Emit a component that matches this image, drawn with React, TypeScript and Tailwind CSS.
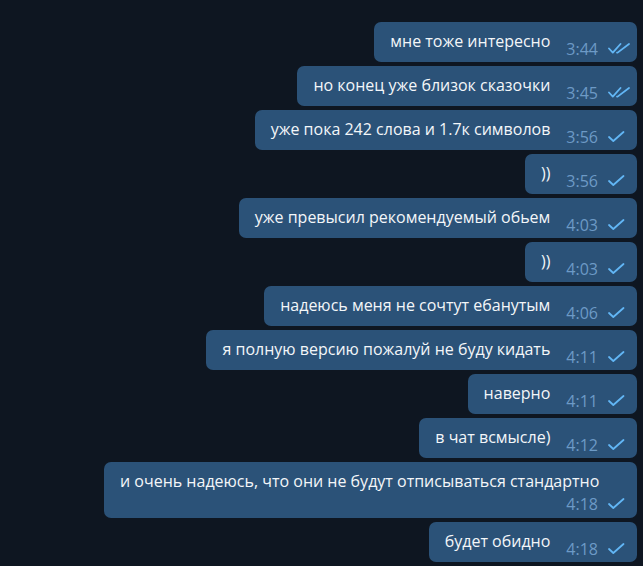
import { FC } from 'react';

type Msg = { text: string; time: string; read?: boolean; wrap?: boolean };

const messages: Msg[] = [
  { text: 'мне тоже интересно', time: '3:44', read: true },
  { text: 'но конец уже близок сказочки', time: '3:45', read: true },
  { text: 'уже пока 242 слова и 1.7к символов', time: '3:56' },
  { text: '))', time: '3:56' },
  { text: 'уже превысил рекомендуемый обьем', time: '4:03' },
  { text: '))', time: '4:03' },
  { text: 'надеюсь меня не сочтут ебанутым', time: '4:06' },
  { text: 'я полную версию пожалуй не буду кидать', time: '4:11' },
  { text: 'наверно', time: '4:11' },
  { text: 'в чат всмысле)', time: '4:12' },
  { text: 'и очень надеюсь, что они не будут отписываться стандартно', time: '4:18', wrap: true },
  { text: 'будет обидно', time: '4:18' },
];

const Check: FC<{ read?: boolean }> = ({ read }) => (
  <span className="w-[22px] h-[11px] flex items-start">
    {read ? (
      <svg width="22" height="11" viewBox="0 0 22 11" fill="none" stroke="#62b6f5" strokeWidth="1.8" strokeLinecap="round" strokeLinejoin="round">
        <path d="M1 5.5 L4.8 9.6 L12.5 1" />
        <path d="M9 9.6 L9.6 9.6 L21 1" />
      </svg>
    ) : (
      <svg width="17" height="11" viewBox="0 0 17 11" fill="none" stroke="#62b6f5" strokeWidth="1.8" strokeLinecap="round" strokeLinejoin="round">
        <path d="M1 6 L5.3 10 L15.5 1" />
      </svg>
    )}
  </span>
);

const Meta: FC<{ time: string; read?: boolean }> = ({ time, read }) => (
  <span className="flex items-start shrink-0">
    <span className="text-[16px] leading-5 text-[#6d9ac6]">{time}</span>
    <span className="ml-[10px] mt-[4px]">
      <Check read={read} />
    </span>
  </span>
);

const Bubble: FC<Msg> = ({ text, time, read, wrap }) => {
  if (wrap) {
    return (
      <div className="flex flex-col w-[533px] h-[56px] pt-[7px] pl-4 pr-[7px] rounded-[7px] bg-[#2b5278]">
        <span className="text-[16px] leading-6 text-[#f3f6f9] whitespace-nowrap">{text}</span>
        <span className="flex justify-end mt-[1px]">
          <Meta time={time} read={read} />
        </span>
      </div>
    );
  }
  return (
    <div className="flex items-start h-[40px] pt-[7px] pl-4 pr-[7px] rounded-[7px] bg-[#2b5278]">
      <span className="text-[16px] leading-6 text-[#f3f6f9] whitespace-nowrap">{text}</span>
      <span className="mt-[10px] ml-[16px]">
        <Meta time={time} read={read} />
      </span>
    </div>
  );
};

export default function App() {
  return (
    <div
      className="w-[643px] h-[566px] overflow-hidden bg-[#0e1621] flex flex-col items-end gap-1 pt-[22px] pr-[6px]"
      style={{ fontFamily: '"Open Sans", sans-serif' }}
    >
      {messages.map((m, i) => (
        <Bubble key={i} {...m} />
      ))}
    </div>
  );
}
